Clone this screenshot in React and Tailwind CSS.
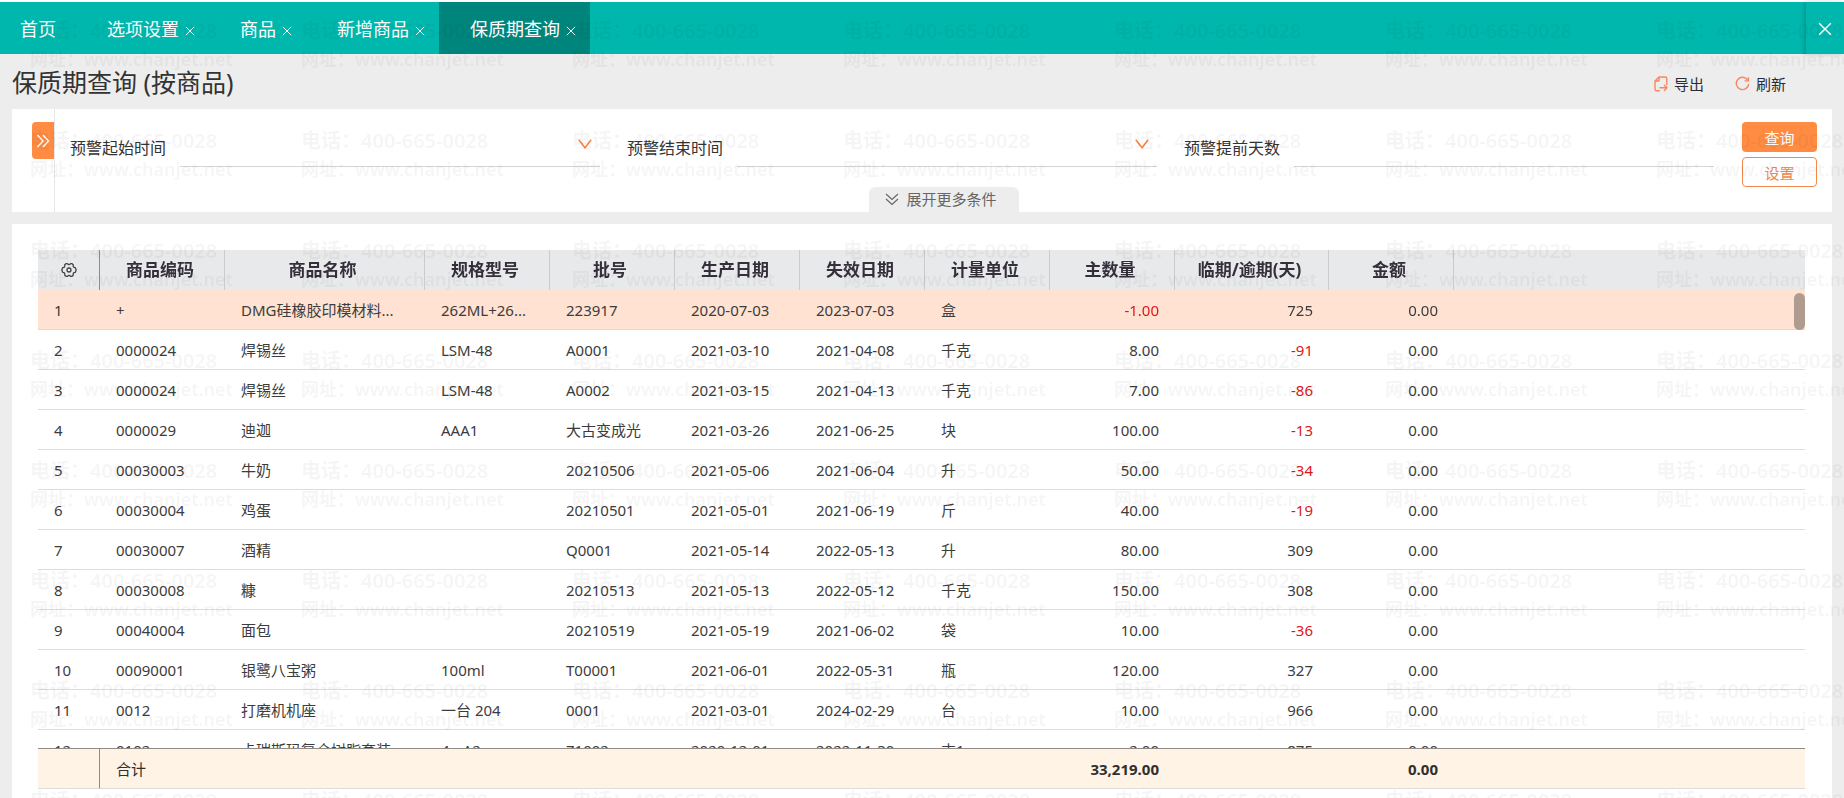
const TABS = [
  { label: '首页', closable: false },
  { label: '选项设置', closable: true },
  { label: '商品', closable: true },
  { label: '新增商品', closable: true },
  { label: '保质期查询', closable: true, active: true },
];

const COLUMNS = [
  { label: '商品编码', width: 'w-[125px]' },
  { label: '商品名称', width: 'w-[200px]' },
  { label: '规格型号', width: 'w-[125px]' },
  { label: '批号', width: 'w-[125px]' },
  { label: '生产日期', width: 'w-[125px]' },
  { label: '失效日期', width: 'w-[125px]' },
  { label: '计量单位', width: 'w-[125px]' },
  { label: '主数量', width: 'w-[125px]', numeric: true },
  { label: '临期/逾期(天)', width: 'w-[154px]', numeric: true },
  { label: '金额', width: 'w-[125px]', numeric: true },
];

const ROWS = [
  ['+', 'DMG硅橡胶印模材料...', '262ML+26...', '223917', '2020-07-03', '2023-07-03', '盒', '-1.00', '725', '0.00'],
  ['0000024', '焊锡丝', 'LSM-48', 'A0001', '2021-03-10', '2021-04-08', '千克', '8.00', '-91', '0.00'],
  ['0000024', '焊锡丝', 'LSM-48', 'A0002', '2021-03-15', '2021-04-13', '千克', '7.00', '-86', '0.00'],
  ['0000029', '迪迦', 'AAA1', '大古变成光', '2021-03-26', '2021-06-25', '块', '100.00', '-13', '0.00'],
  ['00030003', '牛奶', '', '20210506', '2021-05-06', '2021-06-04', '升', '50.00', '-34', '0.00'],
  ['00030004', '鸡蛋', '', '20210501', '2021-05-01', '2021-06-19', '斤', '40.00', '-19', '0.00'],
  ['00030007', '酒精', '', 'Q0001', '2021-05-14', '2022-05-13', '升', '80.00', '309', '0.00'],
  ['00030008', '糠', '', '20210513', '2021-05-13', '2022-05-12', '千克', '150.00', '308', '0.00'],
  ['00040004', '面包', '', '20210519', '2021-05-19', '2021-06-02', '袋', '10.00', '-36', '0.00'],
  ['00090001', '银鹭八宝粥', '100ml', 'T00001', '2021-06-01', '2022-05-31', '瓶', '120.00', '327', '0.00'],
  ['0012', '打磨机机座', '一台 204', '0001', '2021-03-01', '2024-02-29', '台', '10.00', '966', '0.00'],
  ['0102', '卡瑞斯玛复合树脂套装', '4g  A2', 'Z1002', '2020-12-01', '2022-11-30', '支1', '2.00', '875', '0.00'],
];

function Cross({ className }) {
  return (
    <svg viewBox="0 0 12 12" className={className} fill="none" stroke="currentColor" strokeWidth="1.2" aria-hidden="true">
      <path d="M1 1 11 11M11 1 1 11" />
    </svg>
  );
}

function ChevronDown() {
  return (
    <svg viewBox="0 0 14 10" className="h-[10px] w-[14px] text-[#f9853f]" fill="none" stroke="currentColor" strokeWidth="1.5" aria-hidden="true">
      <path d="M0.8 0.8 7 8.8 13.2 0.8" />
    </svg>
  );
}

function ExportIcon() {
  return (
    <svg viewBox="0 0 14 16" className="h-4 w-[14px] text-[#fb8560]" fill="none" stroke="currentColor" strokeWidth="1.4" strokeLinejoin="round" strokeLinecap="round" aria-hidden="true">
      <path d="M5 1H11.2A1.6 1.6 0 0 1 12.8 2.6V8.5M5 1 1 5V13.2A1.6 1.6 0 0 0 2.6 14.8H5.5M5 1V5H1" />
      <path d="M6 11.8H13M10.4 9.2 13 11.8 10.4 14.4" />
    </svg>
  );
}

function RefreshIcon() {
  return (
    <svg viewBox="0 0 16 16" className="h-[15px] w-[15px] text-[#fb8560]" fill="none" stroke="currentColor" strokeWidth="1.5" aria-hidden="true">
      <path d="M13.6 4.4A6.6 6.6 0 1 0 14.6 8.4" />
      <path d="M14.3 1.2V5.2H10.2" />
    </svg>
  );
}

function GearIcon() {
  return (
    <svg viewBox="0 0 16 16" className="h-4 w-4" fill="none" stroke="currentColor" strokeWidth="1.3" strokeLinejoin="round" aria-hidden="true">
      <path d="M5.2 1.6 6.4 1.6Q8 3.6 9.6 1.6L10.8 1.6 12.3 2.8Q11.6 5.4 14.2 5.6L15.2 8 14.2 10.4Q11.6 10.6 12.3 13.2L10.8 14.4 9.6 14.4Q8 12.4 6.4 14.4L5.2 14.4 3.7 13.2Q4.4 10.6 1.8 10.4L0.8 8 1.8 5.6Q4.4 5.4 3.7 2.8Z" />
      <circle cx="8" cy="8" r="2" />
    </svg>
  );
}

function Watermark() {
  return (
    <div aria-hidden="true" className="pointer-events-none absolute inset-0 z-10 overflow-hidden text-black/4 select-none">
      <div className="grid grid-cols-[repeat(7,271px)]">
        {Array.from({ length: 56 }, (_, i) => (
          <div key={i} className="h-[110px] pt-4 pl-[30px] font-semibold whitespace-nowrap">
            <div className="h-[29px] text-[20px] leading-[29px]">电话：400-665-0028</div>
            <div className="h-[29px] text-[18px] leading-[29px]">网址：www.chanjet.net</div>
          </div>
        ))}
      </div>
    </div>
  );
}

function Field({ id, label, dropdown }) {
  return (
    <div className="flex h-[37px] items-start">
      <label htmlFor={id} className="w-[110px] shrink-0 pt-1 text-[16px] leading-7 whitespace-nowrap">{label}</label>
      <div className="flex h-full min-w-0 flex-1 border-b border-[#d6d6d6]">
        <input id={id} type="text" className="min-w-0 flex-1 bg-transparent text-[16px] outline-none" />
        {dropdown && (
          <button type="button" aria-label={'选择' + label} className="flex items-center px-2 pt-1 pb-3">
            <ChevronDown />
          </button>
        )}
      </div>
    </div>
  );
}

function DataTable() {
  return (
    <div className="relative min-h-0 flex-1">
      <div className="h-full overflow-auto [scrollbar-width:none]">
        <table className="w-full table-fixed border-separate border-spacing-0 text-[15px] leading-[22px] text-[#3c3c3c]">
          <thead className="sticky top-0 z-[5]">
            <tr className="h-10 bg-[#e7e9eb] text-[17px] text-[#352f3b]">
              <th className="w-[62px] border-r border-[#8c8c90] p-0">
                <button type="button" aria-label="列设置" className="flex w-full justify-center text-[#444]">
                  <GearIcon />
                </button>
              </th>
              {COLUMNS.map((c) => (
                <th key={c.label} scope="col" className={'border-r border-[#c9cbcd] p-0 pr-1 font-bold ' + c.width}>{c.label}</th>
              ))}
              <td className="p-0" />
            </tr>
          </thead>
          <tbody>
            {ROWS.map((row, r) => (
              <tr key={r} className={r === 0 ? 'relative z-20 h-10 bg-[#ffe2d1]' : 'h-10'}>
                <td className="border-b border-[#dcdcdc] p-0 pt-px pl-4">{r + 1}</td>
                {row.map((value, i) => (
                  <td
                    key={i}
                    className={
                      'truncate border-b border-[#dcdcdc] pt-px pb-0 ' +
                      (COLUMNS[i].numeric ? 'px-4 text-right ' : 'pr-3 pl-4 ') +
                      (COLUMNS[i].numeric && value.startsWith('-') ? 'text-[#e0161b]' : '')
                    }
                  >
                    {value}
                  </td>
                ))}
                <td className="border-b border-[#dcdcdc] p-0" />
              </tr>
            ))}
          </tbody>
          <tfoot className="sticky bottom-0 z-20">
            <tr className="h-[41px] bg-[#fff3e5] text-[#2f2f2f]">
              <td className="border-t border-r border-b border-t-[#8f8b86] border-r-[#8f8b86] border-b-[#dcdcdc] p-0" />
              <th scope="row" colSpan={7} className="border-t border-b border-t-[#8f8b86] border-b-[#dcdcdc] p-0 pt-px pl-4 text-left font-normal">合计</th>
              <td className="border-t border-b border-t-[#8f8b86] border-b-[#dcdcdc] p-0 pt-px pr-4 text-right font-bold">33,219.00</td>
              <td className="border-t border-b border-t-[#8f8b86] border-b-[#dcdcdc] p-0" />
              <td className="border-t border-b border-t-[#8f8b86] border-b-[#dcdcdc] p-0 pt-px pr-4 text-right font-bold">0.00</td>
              <td className="border-t border-b border-t-[#8f8b86] border-b-[#dcdcdc] p-0" />
            </tr>
          </tfoot>
        </table>
      </div>
      <div className="absolute top-[43px] right-0 z-20 h-[37px] w-[11px] rounded-full bg-[#b09c8e]" />
    </div>
  );
}

export default function App() {
  return (
    <div className="relative flex h-screen min-w-[1500px] flex-col overflow-hidden bg-[#ededed] font-['Noto_Sans','Noto_Sans_CJK_SC',sans-serif] text-[#333]">
      <header className="flex h-[54px] shrink-0 border-t-2 border-white bg-[#00b7ad] text-white">
        <nav className="flex flex-1">
          {TABS.map((t) => (
            <div
              key={t.label}
              className={'flex items-center gap-[6px] pt-px ' + (t.active ? 'bg-[#00857c] ' : '') + (t.closable ? 'pr-[14px] pl-[31px]' : 'px-5')}
            >
              <a href="#" className="text-[18px] leading-6 whitespace-nowrap">{t.label}</a>
              {t.closable && (
                <button type="button" aria-label={'关闭' + t.label} className="pt-1">
                  <Cross className="h-[10px] w-[10px]" />
                </button>
              )}
            </div>
          ))}
        </nav>
        <button type="button" aria-label="关闭" className="flex w-[38px] items-center pt-px pl-3 shadow-[-2px_0_4px_rgba(0,0,0,0.18)]">
          <Cross className="h-[14px] w-[14px]" />
        </button>
      </header>

      <div className="flex h-[55px] shrink-0 items-center pr-[58px] pl-3">
        <h1 className="flex-1 text-[25px] leading-8">保质期查询 (按商品)</h1>
        <div className="flex gap-[31px] pt-1 text-[15px] leading-6 text-[#2b2b38]">
          <button type="button" className="flex items-center gap-[6px]"><ExportIcon />导出</button>
          <button type="button" className="flex items-center gap-[6px]"><RefreshIcon />刷新</button>
        </div>
      </div>

      <section className="mx-3 flex h-[103px] shrink-0 bg-white">
        <div className="w-[43px] border-r border-[#e6e6e6] pt-[13px] pl-5">
          <button type="button" aria-label="展开方案" className="flex h-[37px] w-full items-center justify-center rounded-l bg-[#ff8c42] text-white">
            <svg viewBox="0 0 14 14" className="h-[14px] w-[14px]" fill="none" stroke="currentColor" strokeWidth="1.4" aria-hidden="true">
              <path d="M1.5 1 7 7 1.5 13M7 1 12.5 7 7 13" />
            </svg>
          </button>
        </div>
        <div className="flex flex-1 flex-col">
          <div className="flex flex-1 pt-[13px] pr-[15px] pl-[15px]">
            <div className="grid h-[45px] flex-1 grid-cols-3 items-end gap-[27px] pr-7">
              <Field id="warn-start" label="预警起始时间" dropdown />
              <Field id="warn-end" label="预警结束时间" dropdown />
              <Field id="warn-days" label="预警提前天数" />
            </div>
            <div className="flex h-[65px] w-[75px] flex-col gap-[5px] text-[15px]">
              <button type="button" className="h-[30px] rounded bg-[#ff8c42] pt-px leading-[30px] text-white">查询</button>
              <button type="button" className="h-[30px] rounded border border-[#f2884c] pt-px leading-7 text-[#f2884c]">设置</button>
            </div>
          </div>
          <button type="button" className="flex h-[25px] w-[150px] items-center gap-2 self-center rounded-t-md bg-[#ededed] pl-4 text-[15px] whitespace-nowrap text-[#666]">
            <svg viewBox="0 0 14 13" className="h-[13px] w-[14px]" fill="none" stroke="currentColor" strokeWidth="1.2" aria-hidden="true">
              <path d="M1 1 7 6.5 13 1M1 6 7 11.5 13 6" />
            </svg>
            展开更多条件
          </button>
        </div>
      </section>

      <main className="mx-3 mt-3 flex min-h-0 flex-1 flex-col bg-white pt-[26px] pr-[27px] pb-[9px] pl-[26px]">
        <DataTable />
      </main>

      <Watermark />
    </div>
  );
}
